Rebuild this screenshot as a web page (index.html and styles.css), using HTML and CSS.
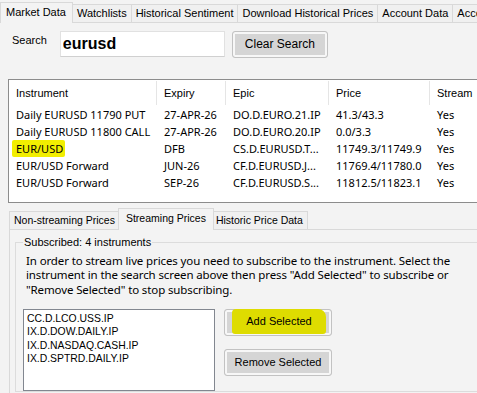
FILE: index.html
```html
<!DOCTYPE html>
<html lang="en">
<head>
  <meta charset="UTF-8" />
  <title>Market Data</title>
  <link rel="stylesheet" href="styles.css">
</head>
<body>
  <nav class="tabstrip main-tabs">
    <span class="tab active">Market Data</span>
    <span class="tab">Watchlists</span>
    <span class="tab">Historical Sentiment</span>
    <span class="tab">Download Historical Prices</span>
    <span class="tab">Account Data</span>
    <span class="tab">Account Activity</span>
  </nav>

  <div class="page">
    <div class="search-row">
      <label class="search-label" for="searchInput">Search</label>
      <input id="searchInput" class="search-input" type="text" value="eurusd" />
      <button class="btn clear-btn">Clear Search</button>
    </div>

    <div class="results">
      <div class="row head">
        <div class="cell">Instrument</div>
        <div class="cell">Expiry</div>
        <div class="cell">Epic</div>
        <div class="cell">Price</div>
        <div class="cell">Stream</div>
      </div>
      <div class="row">
        <div class="cell">Daily EURUSD 11790 PUT</div>
        <div class="cell">27-APR-26</div>
        <div class="cell">DO.D.EURO.21.IP</div>
        <div class="cell">41.3/43.3</div>
        <div class="cell">Yes</div>
      </div>
      <div class="row">
        <div class="cell">Daily EURUSD 11800 CALL</div>
        <div class="cell">27-APR-26</div>
        <div class="cell">DO.D.EURO.20.IP</div>
        <div class="cell">0.0/3.3</div>
        <div class="cell">Yes</div>
      </div>
      <div class="row">
        <div class="cell"><span class="marker">EUR/USD</span></div>
        <div class="cell">DFB</div>
        <div class="cell">CS.D.EURUSD.T...</div>
        <div class="cell">11749.3/11749.9</div>
        <div class="cell">Yes</div>
      </div>
      <div class="row">
        <div class="cell">EUR/USD Forward</div>
        <div class="cell">JUN-26</div>
        <div class="cell">CF.D.EURUSD.J...</div>
        <div class="cell">11769.4/11780.0</div>
        <div class="cell">Yes</div>
      </div>
      <div class="row">
        <div class="cell">EUR/USD Forward</div>
        <div class="cell">SEP-26</div>
        <div class="cell">CF.D.EURUSD.S...</div>
        <div class="cell">11812.5/11823.1</div>
        <div class="cell">Yes</div>
      </div>
    </div>

    <div class="tabstrip sub-tabs">
      <span class="tab">Non-streaming Prices</span>
      <span class="tab active">Streaming Prices</span>
      <span class="tab">Historic Price Data</span>
    </div>

    <div class="sub-panel">
      <fieldset class="subscribed">
        <legend>Subscribed: 4 instruments</legend>
        <p class="hint">In order to stream live prices you need to subscribe to the instrument. Select the instrument in the search screen above then press "Add Selected" to subscribe or "Remove Selected" to stop subscribing.</p>
        <div class="sub-body">
          <div class="listbox">
            <div>CC.D.LCO.USS.IP</div>
            <div>IX.D.DOW.DAILY.IP</div>
            <div>IX.D.NASDAQ.CASH.IP</div>
            <div>IX.D.SPTRD.DAILY.IP</div>
          </div>
          <div class="btn-col">
            <button class="btn add-btn"><span class="btn-marker">Add Selected</span></button>
            <button class="btn">Remove Selected</button>
          </div>
        </div>
      </fieldset>
    </div>
  </div>
</body>
</html>
```

FILE: styles.css
```css
html, body {
  margin: 0;
  padding: 0;
  background: #f3f3f3;
  font-family: "Liberation Sans", Arial, sans-serif;
  font-size: 11px;
  color: #000;
  overflow: hidden;
}
body { width: 477px; height: 393px; }

/* tab strips */
.tabstrip {
  display: flex;
  align-items: flex-end;
  border-bottom: 1px solid #d9d9d9;
  white-space: nowrap;
}
.tab {
  height: 17px;
  line-height: 17px;
  padding: 0 4px;
  border: 1px solid #d9d9d9;
  border-bottom: none;
  border-left: none;
  background: #f0f0f0;
}
.tab:first-child { border-left: 1px solid #d9d9d9; }
.tab.active {
  height: 20px;
  line-height: 18px;
  margin-bottom: -1px;
  background: #f3f3f3;
  position: relative;
  z-index: 1;
}
.main-tabs { height: 21px; width: 600px; padding-top: 1px; }
.main-tabs .tab.active { padding: 0 6px 0 5px; }

.page { padding: 7px 0 0 0; }

/* search */
.search-row {
  display: flex;
  align-items: center;
  height: 28px;
}
.search-label { margin: 0 13px 0 12px; position: relative; top: -4px; }
.search-input {
  width: 159px;
  height: 24px;
  padding: 0 2px;
  border: 1px solid #e1e1e1;
  border-bottom-color: #d0d0d0;
  font-family: "Liberation Sans", Arial, sans-serif;
  font-weight: bold;
  font-size: 16px;
  outline: none;
}
.btn {
  font-family: "Liberation Sans", Arial, sans-serif;
  font-size: 11px;
  color: #000;
  background: #d5d5d5;
  border: 1px solid #c2c2c2;
  border-radius: 3px;
  box-shadow: inset 0 0 0 2px #f7f7f7;
  padding: 0;
}
.clear-btn { width: 96px; height: 27px; margin-left: 7px; font-size: 12px; }

/* results grid */
.results {
  margin: 21px 0 0 8px;
  width: 480px;
  height: 121px;
  background: #fff;
  border: 1px solid #8c8c8c;
  border-right: none;
  padding-top: 1px;
  font-family: "Noto Sans", "Liberation Sans", sans-serif;
  font-size: 11px;
}
.row {
  display: grid;
  grid-template-columns: 148px 69px 103px 101px 60px;
  height: 17px;
  line-height: 17px;
}
.row .cell { padding-left: 7px; white-space: nowrap; overflow: hidden; }
.row.head {
  height: 24px;
  line-height: 24px;
  margin-bottom: 1px;
  font-family: "Liberation Sans", Arial, sans-serif;
}
.row.head .cell { border-right: 1px solid #e5e5e5; }
.marker {
  display: inline-block;
  margin-left: -4px;
  padding: 0 2px 0 4px;
  background: #f2ee00;
  border-radius: 2px;
}

/* lower tabs */
.sub-tabs { margin: 7px 0 0 9px; height: 19px; font-size: 10.5px; }
.sub-tabs .tab { padding: 0 4px; }
.sub-tabs .tab.active { margin-left: -2px; margin-right: -2px; height: 21px; padding: 0 7px; border-left: 1px solid #d9d9d9; }

.sub-panel {
  margin-left: 9px;
  border-left: 1px solid #d9d9d9;
  padding: 6px 0 0 5px;
  height: 200px;
}
.subscribed {
  margin: 0;
  padding: 3px 0 0 7px;
  border: 1px solid #dcdcdc;
  border-right: none;
  min-width: 0;
}
.subscribed legend { padding: 0 1px; margin-left: 0; }
.hint {
  margin: 3px 0 0 3px;
  width: 432px;
  font-family: "Noto Sans", "Liberation Sans", sans-serif;
  font-size: 11.5px;
  letter-spacing: -0.12px;
  line-height: 14.3px;
}
.sub-body { display: flex; gap: 9px; margin-top: 12px; }
.listbox {
  width: 187px;
  height: 78px;
  background: #fff;
  border: 1px solid #828790;
  padding: 2px 0 0 3px;
  font-size: 10.4px;
  line-height: 13.5px;
}
.btn-col { display: flex; flex-direction: column; gap: 13px; }
.btn-col .btn { width: 108px; height: 27px; }
.btn-marker {
  display: block;
  height: 25px;
  line-height: 25px;
  margin: -2px 5px 0 7px;
  background: #dedc00;
  border-radius: 4px 8px 3px 3px;
}
```
